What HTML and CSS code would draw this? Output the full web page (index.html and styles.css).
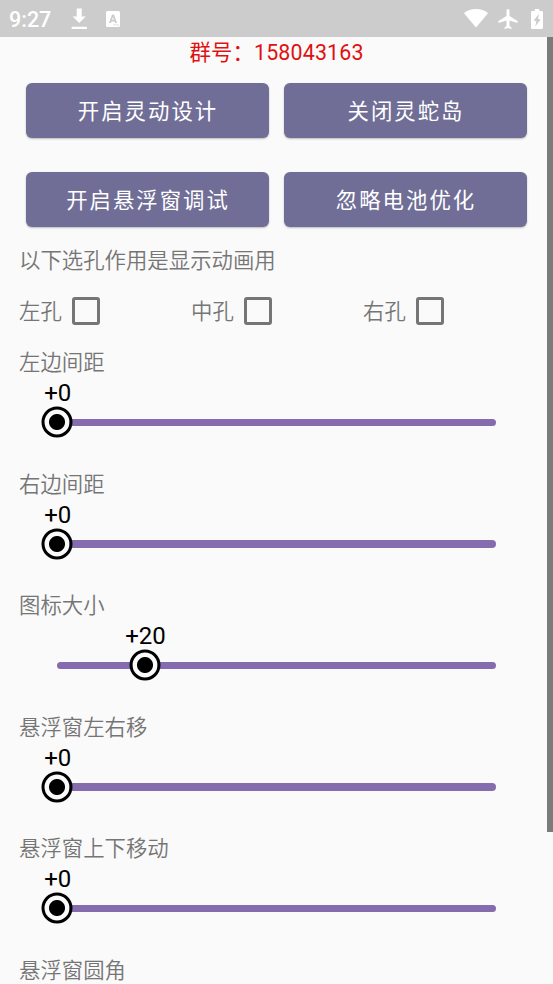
FILE: index.html
```html
<!DOCTYPE html>
<html lang="zh-CN">
<head>
<meta charset="utf-8">
<title>灵动设计</title>
<link rel="stylesheet" href="styles.css">
</head>
<body>
<header class="status">
  <span class="time">9:27</span>
  <svg class="download" width="17" height="22" viewBox="0 0 17 22"><path d="M5.700 0.500h5v8h4.100L8.200 15 1.600 8.500h4.100zM0.600 18.700h15.300v2.200H0.600z"/></svg>
  <svg class="lang" width="14" height="16" viewBox="0 0 14 16"><path fill-rule="evenodd" d="M1.500 0h11Q14 0 14 1.500v13q0 1.500-1.500 1.500h-11Q0 16 0 14.500v-13Q0 0 1.500 0zM6 3.500L3 12h2l.5-1.600h3L9 12h2L8 3.500zm1 2.300l.9 3H6.100zM7.500 13.300v1.200h1v-1.200zm2 0v1.200h1v-1.200zm2 0v1.200h1v-1.200z"/></svg>
  <span class="spacer"></span>
  <svg class="wifi" width="24" height="19" viewBox="0 0 24 19"><path d="M0 4.200Q5 0 12 0t12 4.200L12 18.500z"/></svg>
  <svg class="plane" width="20" height="20" viewBox="2 2 19 20"><path d="M21 16v-2l-8-5V3.500a1.500 1.500 0 0 0-3 0V9l-8 5v2l8-2.500V19l-2 1.500V22l3.500-1 3.500 1v-1.500L13 19v-5.500z"/></svg>
  <svg class="battery" width="12" height="20" viewBox="0 0 12 20"><path fill-rule="evenodd" d="M3.700 0h4.600v2H10.700Q12 2 12 3.300v15.400Q12 20 10.700 20H1.300Q0 20 0 18.700V3.300Q0 2 1.300 2h2.400zM8 4.800L2.800 11.500l2.600.7L4.300 17.500 9.500 10.500 7 9.800z"/></svg>
</header>
<main class="page">
  <p class="group-no">群号：158043163</p>
  <div class="buttons">
    <button>开启灵动设计</button>
    <button>关闭灵蛇岛</button>
    <button>开启悬浮窗调试</button>
    <button>忽略电池优化</button>
  </div>
  <p class="label">以下选孔作用是显示动画用</p>
  <div class="checks">
    <label class="check">左孔<span class="box"></span></label>
    <label class="check">中孔<span class="box"></span></label>
    <label class="check">右孔<span class="box"></span></label>
  </div>
  <section class="setting"><p class="label">左边间距</p><div class="slider"><div class="thumb"><span class="value">+0</span></div></div></section>
  <section class="setting"><p class="label">右边间距</p><div class="slider"><div class="thumb"><span class="value">+0</span></div></div></section>
  <section class="setting"><p class="label">图标大小</p><div class="slider"><div class="thumb" style="left:20%"><span class="value">+20</span></div></div></section>
  <section class="setting"><p class="label">悬浮窗左右移</p><div class="slider"><div class="thumb"><span class="value">+0</span></div></div></section>
  <section class="setting"><p class="label">悬浮窗上下移动</p><div class="slider"><div class="thumb"><span class="value">+0</span></div></div></section>
  <section class="setting"><p class="label">悬浮窗圆角</p></section>
  <div class="scrollbar"></div>
</main>
</body>
</html>
```
FILE: styles.css
```css
* { box-sizing: border-box; }
html, body { height: 100%; }
body {
  margin: 0;
  display: flex;
  flex-direction: column;
  overflow: hidden;
  background: #fafafa;
  color: #757575;
  font: 350 21.4px/31px Roboto, "Noto Sans CJK SC", sans-serif;
}
p { margin: 0; }
.status {
  flex: none;
  display: flex;
  align-items: center;
  height: 37px;
  padding: 0 10px 0 9px;
  background: #ccc;
  color: #fff;
}
.status svg { fill: #fff; }
.time { width: 62px; font-size: 21.5px; font-weight: 500; padding-top: 1px; }
.download { margin-top: 1px; }
.lang { margin-left: 18px; }
.spacer { flex: 1; }
.wifi { margin-right: 10px; }
.plane { margin-right: 13px; }
.page {
  position: relative;
  flex: 1;
  min-height: 0;
  overflow: hidden;
  padding-left: 19px;
}
.group-no {
  width: 515px;
  text-align: center;
  letter-spacing: 0.15px;
  font-weight: 400;
  color: #e01010;
}
.buttons {
  display: grid;
  grid-template-columns: 243px 243px;
  grid-auto-rows: 55px;
  gap: 34px 15px;
  margin: 15px 0 0 7px;
}
button {
  border: 0;
  padding: 2px 0 0 1px;
  border-radius: 6px;
  background: #706e96;
  color: #fff;
  font: inherit;
  font-weight: 400;
  letter-spacing: 2px;
  box-shadow: 0 1px 2px rgba(0, 0, 0, .25);
}
.buttons + .label { margin-top: 18px; }
.checks {
  display: grid;
  grid-template-columns: repeat(3, 172px);
  margin: 20px 0;
}
.check { display: flex; align-items: center; }
.box {
  width: 28px;
  height: 28px;
  margin: -2px 0 0 10px;
  border: 3px solid #757575;
  border-radius: 3px;
}
.setting { height: 121.5px; }
.slider {
  position: relative;
  width: 439px;
  height: 7.500px;
  margin: 40.600px 0 0 38px;
  border-radius: 4px;
  background: #846cae;
}
.thumb {
  position: absolute;
  left: 0;
  top: 50%;
  width: 31px;
  height: 31px;
  transform: translate(-50%, -50%);
  border: 3px solid #000;
  border-radius: 50%;
  background: radial-gradient(circle, #000 7.500px, #fafafa 8.500px);
}
.value {
  position: absolute;
  left: calc(50% + 0.7px);
  bottom: 26px;
  transform: translateX(-50%);
  color: #000;
  font-size: 24px;
  font-weight: 400;
  line-height: 32px;
}
.scrollbar {
  position: absolute;
  top: 0;
  right: 0;
  width: 6px;
  height: 795px;
  background: #7b7b7b;
}
```
